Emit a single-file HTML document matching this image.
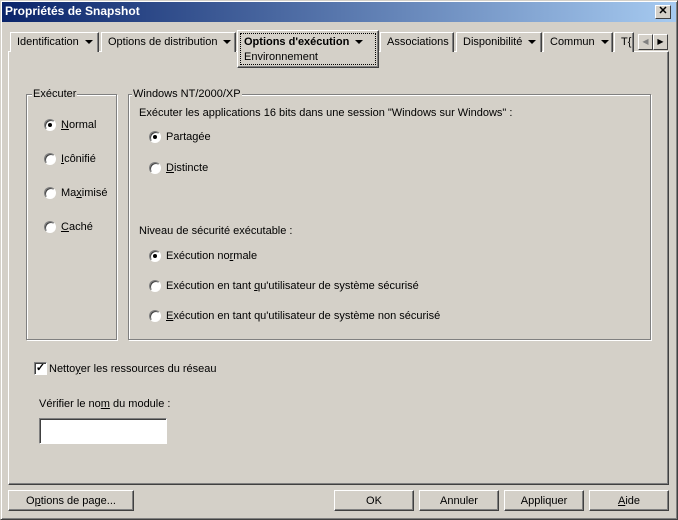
<!DOCTYPE html>
<html><head><meta charset="utf-8"><style>
*{box-sizing:border-box;margin:0;padding:0}
body{width:678px;height:520px;background:#d4d0c8;font-family:"Liberation Sans",Tahoma,sans-serif;font-size:11px;color:#000;position:relative;overflow:hidden}
.a{position:absolute;white-space:nowrap}
.win{position:absolute;left:0;top:0;width:678px;height:520px;border:1px solid;border-color:#d4d0c8 #404040 #404040 #d4d0c8;box-shadow:inset 1px 1px 0 #fff,inset -1px -1px 0 #808080}
.title{position:absolute;left:2px;top:2px;width:674px;height:20px;background:linear-gradient(90deg,#0a246a,#a6caf0);color:#fff;font-weight:bold;font-size:12px;line-height:19px;padding-left:3px}
.close{position:absolute;left:655px;top:5px;width:16px;height:14px;background:#d4d0c8;border:1px solid;border-color:#fff #404040 #404040 #fff;font-size:11px;line-height:11px;text-align:center;color:#000;font-weight:bold}
.panel{position:absolute;left:8px;top:51px;width:661px;height:434px;border:1px solid;border-color:#fff #404040 #404040 #fff;box-shadow:inset -1px -1px 0 #808080}
.tab{position:absolute;top:32px;height:20px;border:1px solid;border-bottom:none;border-color:#fff #404040 #fff #fff;box-shadow:inset -1px 0 0 #808080;padding-left:6px;line-height:19px;background:#d4d0c8}
.arr{display:inline-block;width:0;height:0;border-left:4px solid transparent;border-right:4px solid transparent;border-top:4px solid #000;margin-left:6px;vertical-align:1px}
.grp{position:absolute;border:1px solid #808080;box-shadow:1px 1px 0 #fff,inset 1px 1px 0 #fff}
.lg{position:absolute;top:-7px;background:#d4d0c8;padding:0 1px}
.r{position:absolute;width:12px;height:12px;border-radius:50%;background:#fff;border:1px solid;border-color:#808080 #fff #fff #808080;box-shadow:inset 1px 1px 0 #404040}
.r.on::after{content:"";position:absolute;left:3px;top:3px;width:4px;height:4px;border-radius:50%;background:#000}
.btn{position:absolute;top:490px;height:21px;border:1px solid;border-color:#fff #404040 #404040 #fff;box-shadow:inset -1px -1px 0 #808080;text-align:center;line-height:21px}
u{text-decoration:underline}
</style></head><body>
<div class="win"></div>
<div class="title">Propriétés de Snapshot</div>
<div class="close">✕</div>
<div class="panel"></div>
<div class="tab" style="left:10px;width:89px">Identification<span class="arr"></span></div>
<div class="tab" style="left:101px;width:135px">Options de distribution<span class="arr"></span></div>
<div class="tab" style="left:380px;width:74px">Associations</div>
<div class="tab" style="left:456px;width:86px">Disponibilité<span class="arr"></span></div>
<div class="tab" style="left:543px;width:70px">Commun<span class="arr"></span></div>
<div class="tab" style="left:614px;width:20px;overflow:hidden">T{</div>
<div class="a" style="left:237px;top:30px;width:142px;height:38px;background:#d4d0c8;border:1px solid;border-color:#fff #404040 #404040 #fff;box-shadow:inset -1px -1px 0 #808080"></div>
<div class="a" style="left:240px;top:33px;width:136px;height:32px;border:1px dotted #000"></div>
<div class="a" style="left:244px;top:36px;font-weight:bold">Options d'exécution<span class="arr"></span></div>
<div class="a" style="left:244px;top:51px">Environnement</div>
<div class="a" style="left:638px;top:34px;width:15px;height:16px;border:1px solid;border-color:#fff #404040 #404040 #fff;font-size:8px;line-height:14px;text-align:center;color:#808080">◀</div>
<div class="a" style="left:653px;top:34px;width:15px;height:16px;border:1px solid;border-color:#fff #404040 #404040 #fff;font-size:8px;line-height:14px;text-align:center">▶</div>

<div class="grp" style="left:26px;top:94px;width:91px;height:246px"><span class="lg" style="left:5px">Exécuter</span></div>
<div class="r on" style="left:44px;top:119px"></div><div class="a" style="left:61px;top:119px"><u>N</u>ormal</div>
<div class="r" style="left:44px;top:153px"></div><div class="a" style="left:61px;top:153px"><u>I</u>cônifié</div>
<div class="r" style="left:44px;top:187px"></div><div class="a" style="left:61px;top:187px">Ma<u>x</u>imisé</div>
<div class="r" style="left:44px;top:221px"></div><div class="a" style="left:61px;top:221px"><u>C</u>aché</div>

<div class="grp" style="left:128px;top:94px;width:523px;height:246px"><span class="lg" style="left:3px">Windows NT/2000/XP</span></div>
<div class="a" style="left:139px;top:107px">Exécuter les applications 16 bits dans une session "Windows sur Windows" :</div>
<div class="r on" style="left:149px;top:131px"></div><div class="a" style="left:166px;top:131px">Parta<u>g</u>ée</div>
<div class="r" style="left:149px;top:162px"></div><div class="a" style="left:166px;top:162px"><u>D</u>istincte</div>
<div class="a" style="left:139px;top:225px">Niveau de sécurité exécutable :</div>
<div class="r on" style="left:149px;top:250px"></div><div class="a" style="left:166px;top:250px">Exécution no<u>r</u>male</div>
<div class="r" style="left:149px;top:280px"></div><div class="a" style="left:166px;top:280px">Exécution en tant <u>q</u>u'utilisateur de système sécurisé</div>
<div class="r" style="left:149px;top:310px"></div><div class="a" style="left:166px;top:310px"><u>E</u>xécution en tant qu'utilisateur de système non sécurisé</div>

<div class="a" style="left:34px;top:362px;width:13px;height:13px;background:#fff;border:1px solid;border-color:#808080 #fff #fff #808080;box-shadow:inset 1px 1px 0 #404040;font-size:11px;line-height:10px;text-align:center;font-weight:bold">✓</div>
<div class="a" style="left:49px;top:363px">Netto<u>y</u>er les ressources du réseau</div>
<div class="a" style="left:39px;top:398px">Vérifier le no<u>m</u> du module :</div>
<div class="a" style="left:39px;top:418px;width:128px;height:26px;background:#fff;border:1px solid;border-color:#808080 #fff #fff #808080;box-shadow:inset 1px 1px 0 #404040"></div>

<div class="btn" style="left:8px;width:126px">O<u>p</u>tions de page...</div>
<div class="btn" style="left:334px;width:80px">OK</div>
<div class="btn" style="left:419px;width:80px">Annuler</div>
<div class="btn" style="left:504px;width:80px">Appliquer</div>
<div class="btn" style="left:589px;width:80px"><u>A</u>ide</div>
</body></html>
